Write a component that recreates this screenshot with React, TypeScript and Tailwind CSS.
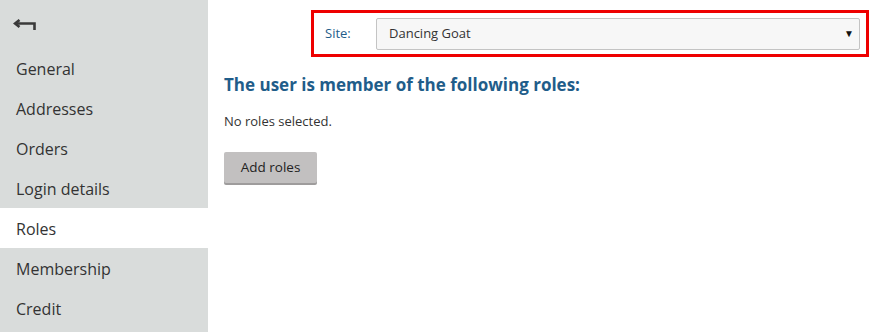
export default function App() {
  const items = ["General", "Addresses", "Orders", "Login details", "Roles", "Membership", "Credit"];
  return (
    <div className="flex w-[885px] h-[332px] bg-white" style={{ fontFamily: '"Open Sans", "Noto Sans", sans-serif' }}>
      <div className="w-[208px] h-full bg-[#d9dcdb] flex flex-col">
        <div className="h-[48px] flex items-center pl-[13px] pt-[1px]">
          <svg width="23" height="12" viewBox="0 0 23 12" fill="none" stroke="#3a3a3a" strokeWidth="2.6">
            <path d="M6.5 1 L2 4.5 L6.5 8" />
            <path d="M2 4.5 H21.5 V11" />
          </svg>
        </div>
        {items.map((it) => (
          <div
            key={it}
            className={`h-[40px] flex items-center pl-[16px] pt-[1px] text-[16px] text-[#333] ${it === "Roles" ? "bg-white" : ""}`}
          >
            {it}
          </div>
        ))}
      </div>
      <div className="flex-1 flex flex-col pl-[16px] pr-[16px]">
        <div className="flex justify-end pt-[10px]">
          <div className="w-[558px] h-[47px] border-[3px] border-[#ee0000] flex items-center pl-[11px] pr-[6px]">
            <span className="text-[13px] text-[#1f5d8a] w-[51px]">Site:</span>
            <div className="flex-1 h-[32px] border border-[#c4c4c4] rounded-[2px] bg-[#f7f7f7] flex items-center justify-between pl-[12px] pr-[5px]">
              <span className="text-[13px] text-[#333]">Dancing Goat</span>
              <span className="text-[10px] text-[#111]">▼</span>
            </div>
          </div>
        </div>
        <h1 className="mt-[17px] text-[17px] font-bold text-[#1f5d8a] leading-[22px]">The user is member of the following roles:</h1>
        <p className="mt-[16px] text-[13px] text-[#333]">No roles selected.</p>
        <div className="mt-[20px]">
          <button className="w-[93px] h-[31px] bg-[#c2c0c0] rounded-[2px] text-[13.5px] text-[#222] shadow-[0_2px_0_#9e9c9c]">Add roles</button>
        </div>
      </div>
    </div>
  );
}
